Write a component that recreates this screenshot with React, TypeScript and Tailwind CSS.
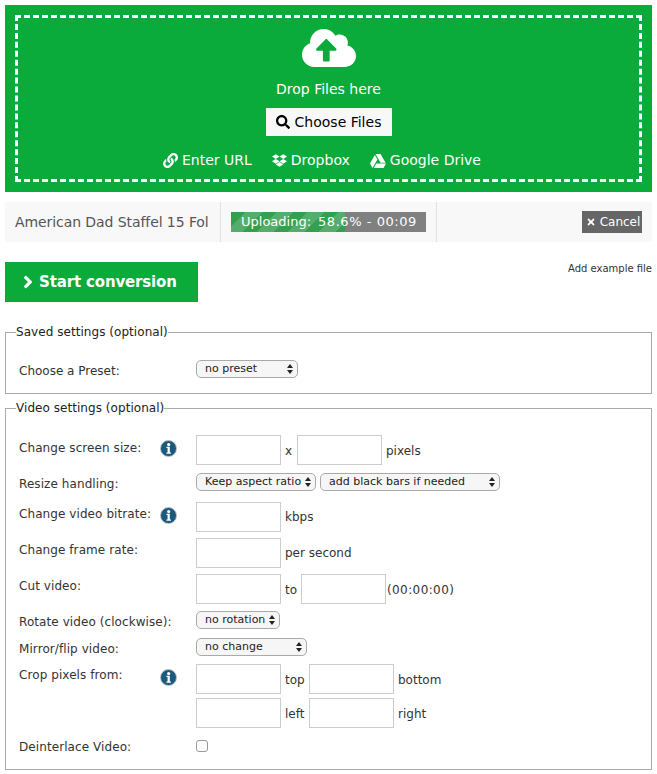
import { FaCloudUploadAlt, FaDropbox, FaGoogleDrive, FaLink, FaSearch, FaTimes, FaAngleRight } from 'react-icons/fa';

const font = "font-['DejaVu_Sans',Verdana,sans-serif]";

function Info() {
    return (
        <svg width="17" height="17" viewBox="0 0 18 18" className="block ml-[-1px]">
            <circle cx="9" cy="9" r="8.5" fill="#1c5a7d" stroke="#b9c6cf" strokeWidth="1" />
            <circle cx="9.2" cy="4.8" r="1.7" fill="#fff" />
            <path d="M6.8 7.2h3.6v6h1.2v1.4H6.8v-1.4H8V8.6H6.8z" fill="#fff" />
        </svg>
    );
}

function Box({ w = 'w-[85px]' }: { w?: string }) {
    return <input type="text" className={`${w} h-[30px] border border-[#ccc] bg-white`} />;
}

function Select({ w, label }: { w: string; label: string }) {
    return (
        <div className={`${w} h-[18px] flex items-center justify-between rounded-[5px] border border-[#aaa] bg-[#f6f6f6] pl-[8px] pr-[4px] text-[11px] text-[#222]`}>
            <span className="whitespace-nowrap">{label}</span>
            <svg width="6" height="10" viewBox="0 0 6 10" className="shrink-0"><path d="M3 0l3 4H0zM3 10L0 6h6z" fill="#222" /></svg>
        </div>
    );
}

function Row({ label, info, h, labelTop = 'pt-[3px]', children, mb }: { label: string; info?: boolean; h: string; labelTop?: string; children: React.ReactNode; mb: string }) {
    return (
        <div className={`flex ${h} ${mb}`}>
            <div className={`w-[142px] text-[12px] tracking-[0.08px] text-[#333] whitespace-nowrap ${labelTop}`}>{label}</div>
            <div className="w-[35px] pt-[5px]">{info && <Info />}</div>
            <div className="flex items-start">{children}</div>
        </div>
    );
}

function Unit({ children, w, pl = 'pl-[4px]', pt = 'pt-[7px]' }: { children: React.ReactNode; w?: string; pl?: string; pt?: string }) {
    return <span className={`${w ?? ''} ${pl} ${pt} text-[12px] text-[#333] whitespace-nowrap`}>{children}</span>;
}

export default function App() {
    return (
        <div className={`${font} w-[657px] h-[774px] overflow-hidden bg-white pl-[5px] pr-[5px] pt-[5px]`}>
            {/* drop zone */}
            <div className="h-[187px] bg-[#0aaa3b] pt-[10px] px-[10px]">
                <div className="h-[167px] border-[3px] border-dashed border-white flex flex-col items-center text-white">
                    <FaCloudUploadAlt className="text-[54px] mt-[3px] h-[54px]" />
                    <div className="mt-[6px] text-[14px] leading-[17px]">Drop Files here</div>
                    <div className="mt-[10px] h-[28px] w-[126px] bg-[#f8f8f8] flex items-center justify-center gap-[5px] text-[14px] text-black">
                        <FaSearch className="text-[14px]" />
                        <span>Choose Files</span>
                    </div>
                    <div className="mt-[16px] pr-[13px] flex items-center text-[14px] leading-[17px] gap-[20px]">
                        <span className="flex items-center gap-[4px]"><FaLink className="text-[15px]" />Enter URL</span>
                        <span className="flex items-center gap-[4px]"><FaDropbox className="text-[15px]" />Dropbox</span>
                        <span className="flex items-center gap-[4px]"><FaGoogleDrive className="text-[16px]" />Google Drive</span>
                    </div>
                </div>
            </div>

            {/* upload row */}
            <div className="mt-[10px] h-[40px] bg-[#f8f8f8] rounded-[2px] flex items-center text-[#555]">
                <div className="w-[216px] pl-[10px] h-full flex items-center border-r border-[#e2e2e2] text-[14px]">
                    <span className="whitespace-nowrap tracking-[-0.08px]">American Dad Staffel 15 Fol</span>
                </div>
                <div className="w-[216px] h-full flex items-center pl-[10px] border-r border-[#e2e2e2]">
                    <div className="relative w-[195px] h-[20px] bg-[#808080] text-[13px] text-white">
                        <div className="absolute inset-y-0 left-0 w-[58.6%] bg-[repeating-linear-gradient(135deg,#33a04f_0,#33a04f_10px,#55ad6b_10px,#55ad6b_22px)]" />
                        <div className="absolute inset-0 pl-[10px] leading-[20px] flex gap-[7px] whitespace-nowrap">
                            <span>Uploading:</span>
                            <span className="tracking-[0.55px]">58.6% - 00:09</span>
                        </div>
                    </div>
                </div>
                <div className="flex-1 flex justify-end pr-[10px]">
                    <div className="h-[22px] w-[60px] bg-[#666] text-white text-[12px] flex items-center justify-center gap-[4px] pl-[2px]">
                        <FaTimes className="text-[10px]" />
                        <span>Cancel</span>
                    </div>
                </div>
            </div>

            {/* start + example */}
            <div className="mt-[20px] h-[40px] flex justify-between items-start">
                <div className="w-[193px] h-[40px] bg-[#0aaa3b] text-white font-bold text-[15px] tracking-[-0.15px] flex items-center pl-[13px] gap-[1px]">
                    <FaAngleRight className="text-[20px]" />
                    <span className="pt-[1px]">Start conversion</span>
                </div>
                <span className="text-[10px] text-[#333] whitespace-nowrap -mt-[1px]">Add example file</span>
            </div>

            {/* saved settings */}
            <fieldset className="mt-[22px] h-[70px] border border-[#aaa] px-[13px]">
                <legend className="ml-[-3px] text-[12px] leading-[16px] tracking-[0.05px] text-[#222]">Saved settings (optional)</legend>
                <div className="flex mt-[20px]">
                    <div className="w-[177px] pt-[2px] text-[12px] text-[#333]">Choose a Preset:</div>
                    <Select w="w-[102px]" label="no preset" />
                </div>
            </fieldset>

            {/* video settings */}
            <fieldset className="mt-[6px] h-[370px] border border-[#aaa] px-[13px]">
                <legend className="ml-[-3px] text-[12px] leading-[16px] tracking-[0.05px] text-[#222]">Video settings (optional)</legend>
                <div className="pt-[19px]">
                    <Row label="Change screen size:" info h="h-[30px]" labelTop="pt-[4px]" mb="mb-[8px]">
                        <Box /><Unit w="w-[16px]">x</Unit><Box /><Unit>pixels</Unit>
                    </Row>
                    <Row label="Resize handling:" h="h-[17px]" labelTop="pt-[2px]" mb="mb-[12px]">
                        <div className="flex gap-[4px]">
                            <Select w="w-[120px]" label="Keep aspect ratio" />
                            <Select w="w-[180px]" label="add black bars if needed" />
                        </div>
                    </Row>
                    <Row label="Change video bitrate:" info h="h-[30px]" mb="mb-[6px]">
                        <Box /><Unit pt="pt-[6px]">kbps</Unit>
                    </Row>
                    <Row label="Change frame rate:" h="h-[30px]" mb="mb-[6px]">
                        <Box /><Unit pt="pt-[6px]">per second</Unit>
                    </Row>
                    <Row label="Cut video:" h="h-[30px]" mb="mb-[7px]">
                        <Box /><Unit w="w-[20px]">to</Unit><Box /><Unit pl="pl-[1px] tracking-[0.4px]">(00:00:00)</Unit>
                    </Row>
                    <Row label="Rotate video (clockwise):" h="h-[17px]" labelTop="pt-[2px]" mb="mb-[10px]">
                        <Select w="w-[84px]" label="no rotation" />
                    </Row>
                    <Row label="Mirror/flip video:" h="h-[17px]" labelTop="pt-[2px]" mb="mb-[9px]">
                        <Select w="w-[111px]" label="no change" />
                    </Row>
                    <Row label="Crop pixels from:" info h="h-[30px]" labelTop="pt-[2px]" mb="mb-[4px]">
                        <Box /><Unit w="w-[28px]">top</Unit><Box /><Unit>bottom</Unit>
                    </Row>
                    <Row label="" h="h-[30px]" mb="mb-[12px]">
                        <Box /><Unit w="w-[28px]">left</Unit><Box /><Unit>right</Unit>
                    </Row>
                    <Row label="Deinterlace Video:" h="h-[12px]" labelTop="-mt-[2px]" mb="mb-0">
                        <div className="w-[12px] h-[12px] rounded-[3px] border border-[#999] bg-white" />
                    </Row>
                </div>
            </fieldset>
        </div>
    );
}
